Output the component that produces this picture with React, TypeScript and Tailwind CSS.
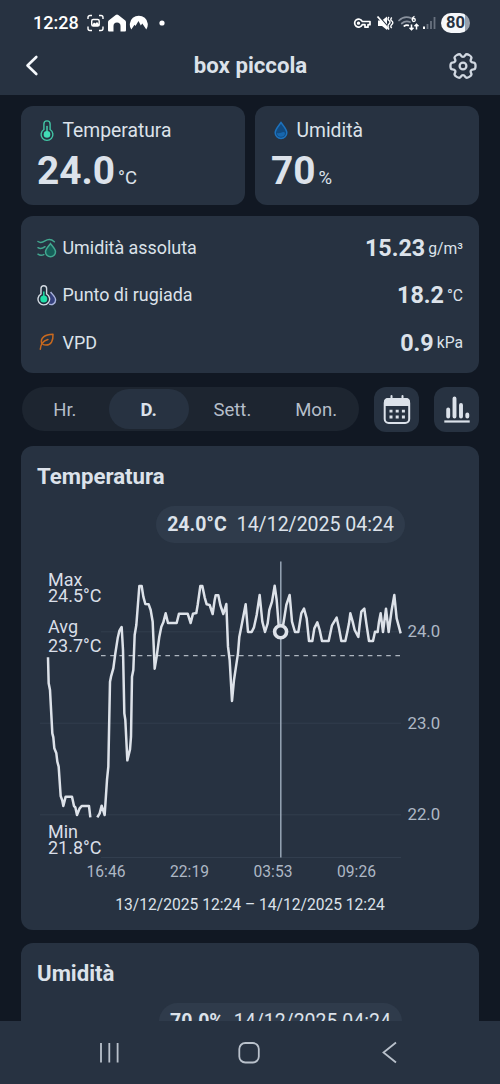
import type {ReactNode} from "react";

type Point = [number, number];

const TABS = ["Hr.", "D.", "Sett.", "Mon."];

const GRID = [
  {y: 81.8, x: 80, label: "24.0"},
  {y: 173.2, x: 19, label: "23.0"},
  {y: 264.8, x: 19, label: "22.0"},
];

const HOURS = [
  {x: 85, label: "16:46"},
  {x: 168.5, label: "22:19"},
  {x: 252, label: "03:53"},
  {x: 335.5, label: "09:26"},
];

// Samples are stored in thirds of a pixel, the chart scales them down
const FIRST_RUN: Point[] = [
  [54, 322], [56, 400], [60, 420], [67, 550], [70, 562], [73, 595], [79, 610], [82, 635], [86, 650],
  [92, 738], [97, 752], [100, 768], [107, 740], [126, 740], [132, 768], [136, 772], [141, 795],
  [149, 775], [155, 768], [177, 768], [181, 802],
];

const SECOND_RUN: Point[] = [
  [202, 802], [209, 790], [215, 767], [224, 795], [231, 690], [235, 650], [240, 395], [243, 380],
  [250, 355], [256, 310], [263, 265], [268, 243], [275, 231], [279, 300], [283, 490], [286, 510],
  [292, 631], [300, 598], [303, 560], [306, 380], [310, 360], [314, 255], [319, 225], [328, 108],
  [335, 108], [340, 140], [346, 162], [356, 163], [362, 180], [368, 215], [374, 356], [380, 320],
  [388, 260], [394, 230], [400, 217], [407, 190], [414, 219], [440, 219], [447, 191], [473, 191],
  [482, 219], [489, 191], [499, 189], [503, 165], [511, 108], [517, 108], [524, 142], [530, 163],
  [539, 165], [548, 192], [554, 150], [557, 136], [565, 136], [571, 165], [580, 192], [589, 162],
  [594, 290], [599, 330], [606, 453], [612, 390], [618, 350], [624, 310], [628, 260], [634, 230],
  [647, 163], [654, 246], [665, 246], [672, 232], [680, 195], [689, 135], [697, 215], [705, 246],
  [713, 220], [718, 180], [726, 155], [734, 107], [740, 150], [746, 225], [752, 246], [760, 222],
  [769, 165], [779, 135], [786, 215], [795, 246], [805, 246], [810, 215], [814, 190], [822, 176],
  [830, 205], [837, 273], [847, 273], [853, 235], [862, 217], [869, 240], [876, 273], [896, 273],
  [906, 226], [920, 203], [927, 235], [934, 273], [946, 273], [952, 245], [957, 220], [961, 190],
  [968, 215], [974, 240], [985, 261], [989, 225], [994, 185], [1003, 176], [1009, 220], [1017, 273],
  [1029, 273], [1035, 245], [1043, 246], [1047, 215], [1052, 190], [1059, 246], [1068, 176],
  [1076, 246], [1085, 180], [1093, 135], [1100, 205], [1112, 250],
];

function toPoints(points: Point[]) {
  return points.map((point) => point.join(",")).join(" ");
}

function gearPath() {
  const corners: Point[] = [];

  for (let i = 0; i < 6; i++) {
    [
      [13, -15],
      [13, 15],
      [9.2, 22],
      [9.2, 38],
    ].forEach(([radius, offset]) => {
      const angle = ((i * 60 + offset) * Math.PI) / 180;

      corners.push([14 + radius * Math.cos(angle), 14 + radius * Math.sin(angle)]);
    });
  }

  const middle = (a: Point, b: Point) => `${(a[0] + b[0]) / 2} ${(a[1] + b[1]) / 2}`;

  return (
    `M${middle(corners[corners.length - 1], corners[0])}` +
    corners
      .map((corner, i) => `Q${corner.join(" ")} ${middle(corner, corners[(i + 1) % corners.length])}`)
      .join("") +
    "Z"
  );
}

function ThermometerIcon() {
  return (
    <svg className="h-[22px] w-5" fill="none" viewBox="0 0 20 22">
      <path
        d="M6.900 9.500V4a3.100 3.100 0 0 1 6.200 0V9.500a5.900 5.900 0 1 1-6.200 0Z"
        stroke="#42c5a5"
        strokeWidth="1.400"
      />
      <path d="M10 6.500v7" stroke="#42c5a5" strokeLinecap="round" strokeWidth="1.600" />
      <circle cx="10" cy="14.400" fill="#42dcb6" r="3.300" />
    </svg>
  );
}

function DropIcon() {
  return (
    <svg className="h-[22px] w-5" fill="none" viewBox="0 0 20 22">
      <path
        d="M10 2.500C7.800 5.700 4.200 9.100 4.200 12.700a5.800 5.800 0 0 0 11.600 0C15.800 9.100 12.200 5.700 10 2.500Z"
        fill="#124a7f"
        stroke="#1d72bd"
        strokeWidth="1.500"
      />
      <path d="M6 12.700a4 4 0 0 0 8 0c-1.500-1.500-2.500-.5-4 0s-2.500.8-4 0Z" fill="#1767ae" />
    </svg>
  );
}

function AbsoluteIcon() {
  return (
    <svg className="h-[22px] w-5" fill="none" viewBox="0 0 20 22">
      <g stroke="#42a890" strokeLinecap="round" strokeWidth="1.500">
        <path d="M1 3.500c2.500 1.800 4.500 1 7-.6s6-2.200 9.300.8" />
        <path d="M1 9.700c2.200 1.500 4.500 1 7-1" />
        <path d="M1 16.200c2 1.400 4 1.300 5.800.4" />
      </g>
      <path
        d="M13.500 5.600c-1.900 2.600-5 5-5 8.200a5 5 0 0 0 10 0c0-3.200-3.100-5.600-5-8.200Z"
        fill="#155e58"
        stroke="#42a890"
        strokeWidth="1.500"
      />
    </svg>
  );
}

function DewIcon() {
  return (
    <svg className="h-[22px] w-5" fill="none" viewBox="0 0 20 22">
      <path
        d="M13.600 7c2 2.700 5 4.800 5 8a4.600 4.600 0 0 1-6.400 4.200"
        fill="#35417d"
        stroke="#aab4dc"
        strokeWidth="1.400"
      />
      <path
        d="M4 9V3.500a2.800 2.800 0 0 1 5.600 0V9a5.800 5.800 0 1 1-5.600 0Z"
        fill="#1f2f3d"
        stroke="#d5dbe3"
        strokeWidth="1.400"
      />
      <path d="M6.800 6.500v7" stroke="#21cf9c" strokeWidth="1.600" />
      <circle cx="6.800" cy="14" fill="#21dfa8" r="3.500" />
    </svg>
  );
}

function LeafIcon() {
  return (
    <svg className="h-[22px] w-5" fill="none" viewBox="0 0 20 22">
      <g stroke="#c9691e" strokeLinecap="round" strokeLinejoin="round" strokeWidth="1.500">
        <path d="M4.600 11.300C3.200 6 7.500 2.500 16 2.300c.3 6.300-1.800 10.700-7 10.700-1.300 0-2.300-.2-3-.6" />
        <path d="M3.300 17.300c.2-5 2.200-8.500 7.600-9.900" />
      </g>
    </svg>
  );
}

function StatusBar() {
  return (
    <div className="flex h-[44px] items-center pt-px pr-[30px] pl-[33px] text-white">
      <span className="w-[52.500px] text-[18px] leading-none font-medium">12:28</span>
      <svg className="h-[18px] w-[84px]" fill="none" viewBox="0 0 84 18">
        <g stroke="#fff" strokeWidth="1.400">
          <path d="M2 5V3.500A2 2 0 0 1 4 1.500h2M13 1.500h2a2 2 0 0 1 2 2V5M17 12.500v2a2 2 0 0 1-2 2h-2M6 16.500H4a2 2 0 0 1-2-2v-2" />
          <rect height="6.500" rx="1.500" width="7.500" x="5.700" y="5.500" />
        </g>
        <path d="m6 11 2-2.500 1.500 1 1.500-1.500 2.300 2.500v1.500H6Z" fill="#fff" />
        <path
          d="M22 16V8.200c0-.8.4-1.400 1-1.900l6.700-5.400a2.200 2.200 0 0 1 2.600 0L39 6.300c.6.500 1 1.100 1 1.900V16c0 1-.5 1.500-1.500 1.500h-4V12a3.500 3.500 0 0 0-7 0v5.500h-4c-1 0-1.500-.5-1.500-1.500Z"
          fill="#fff"
        />
        <path
          d="M45.300 15.600A9 9 0 1 1 60.300 15.600L56.300 9.500l-1.500 2L52.500 7l-3 5-1-1.200Z"
          fill="#fff"
        />
        <circle cx="76" cy="9" fill="#fff" r="2.600" />
      </svg>
      <svg className="mr-[5.500px] ml-auto h-[18px] w-[83px]" fill="none" viewBox="0 0 83 18">
        <g stroke="#fff" strokeWidth="1.700">
          <path d="M9.300 7.500H17v3.200h-2v2.500h-3v-2.500H9.300a4 4 0 1 1 0-3.200Z" strokeLinejoin="round" />
          <circle cx="5.500" cy="9.200" fill="#fff" r=".8" />
        </g>
        <path d="M25 6.500h4l5-4V16l-5-4h-4Z" fill="#fff" />
        <path d="m25.500 2 11.500 13" stroke="#273241" strokeWidth="1.500" />
        <path d="m24.500 2.500 11.500 13" stroke="#fff" strokeWidth="1.800" />
        <path
          d="M36 3q-2 2 0 3.500t0 3.500 0 3.500M38.800 3.500q-2 2 0 3.500t0 3.500 0 3.500"
          stroke="#fff"
          strokeWidth="1.400"
        />
        <g strokeLinecap="round" strokeWidth="1.700">
          <path d="M46 6.500C49.500 3 54 2.300 58.500 4.300" stroke="#8a929e" />
          <path d="M48.700 9.500c2.600-2.300 5.500-2.600 8.300-1.500" stroke="#8a929e" />
          <path d="M51.300 12c1.300-1 2.500-1.200 4-.6" stroke="#fff" />
        </g>
        <path
          d="M58.500 10.500v5m-2-1.700 2 2 2-2M63.500 15.500v-5m-2 1.700 2-2 2 2"
          stroke="#fff"
          strokeWidth="1.500"
        />
        <path d="M61.500 2.300q-2.300 1-2.300 3.400" stroke="#fff" strokeWidth="1.300" />
        <circle cx="60.800" cy="6" r="1.500" stroke="#fff" strokeWidth="1.300" />
        <path d="M71 12.500V15" stroke="#fff" strokeWidth="2" />
        <path d="M74.500 10v5M78 7v8M81.500 3v12" stroke="#69727f" strokeWidth="1.800" />
      </svg>
      <span className="flex h-5 w-[29px] items-center justify-center rounded-full bg-linear-to-r from-[#f5f7fa] from-82% to-[#98a0ab] to-82% pt-0.5 text-[16.500px] leading-none font-bold text-[#273241]">
        80
      </span>
    </div>
  );
}

function Reading({icon, label, value, unit}: {icon: ReactNode; label: string; value: string; unit: string}) {
  return (
    <article className="h-[99px] flex-1 rounded-xl bg-[#273241] px-4 pt-[13px]">
      <div className="flex items-center gap-[5.500px] text-[19.300px] leading-6">
        {icon}
        <h2>{label}</h2>
      </div>
      <p className="mt-1.5 flex items-baseline gap-[3px] leading-[44px]">
        <span className="text-[38.800px] font-bold">{value}</span>
        <span className="text-[18.500px]">{unit}</span>
      </p>
    </article>
  );
}

function Measure({icon, label, value, unit}: {icon: ReactNode; label: string; value: string; unit: string}) {
  return (
    <li className="flex h-[47.200px] items-center gap-[5.500px]">
      {icon}
      <span className="text-[17.900px]">{label}</span>
      <p className="ml-auto flex items-center gap-[3px]">
        <span className="text-[23.300px] font-bold">{value}</span>
        <span className="text-[15.700px]">{unit}</span>
      </p>
    </li>
  );
}

function Marker({value, date}: {value: string; date: string}) {
  return (
    <p className="mx-auto flex h-[37px] w-fit items-center gap-2.5 rounded-full bg-[#2f3b4b] px-[11px] pt-px text-[19.500px]">
      <b>{value}</b>
      <span>{date}</span>
    </p>
  );
}

function Chart() {
  return (
    <svg className="block h-[335px] w-full" fill="none" viewBox="0 0 458 335">
      <g stroke="#323e4e" strokeWidth="1">
        {GRID.map(({y, x, label}) => (
          <path key={label} d={`M${x} ${y}H380`} />
        ))}
        <path d="M80 307.500H380" />
      </g>
      <path d="M80 105.700H380" stroke="#aeb6c0" strokeDasharray="4.600 4.600" strokeWidth="1.300" />
      <g
        stroke="#dde2e9"
        strokeLinejoin="round"
        strokeWidth="7.500"
        transform="translate(9 0) scale(.33333)"
      >
        <polyline points={toPoints(FIRST_RUN)} />
        <polyline points={toPoints(SECOND_RUN)} />
      </g>
      <path d="M259.800 11.500V307.500" stroke="#98a6b6" strokeWidth="1.500" />
      <circle cx="259.600" cy="81.800" fill="#273241" r="6" stroke="#dde2e9" strokeWidth="3.600" />
      <g fill="#d9dfe8" fontSize="18">
        <text x="27" y="35.500">Max</text>
        <text x="27" y="52.300">24.5°C</text>
        <text x="27" y="82.500">Avg</text>
        <text x="27" y="101.700">23.7°C</text>
        <text x="27" y="287.700">Min</text>
        <text x="27" y="304.300">21.8°C</text>
      </g>
      <g fill="#aeb8c5" fontSize="16.800">
        {GRID.map(({y, label}) => (
          <text key={label} x="386.500" y={y + 5.300}>
            {label}
          </text>
        ))}
      </g>
      <g fill="#aeb8c5" fontSize="15.600" textAnchor="middle">
        {HOURS.map(({x, label}) => (
          <text key={label} x={x} y="327.300">
            {label}
          </text>
        ))}
      </g>
    </svg>
  );
}

export default function App() {
  return (
    <div className="flex h-[1084px] w-[500px] flex-col overflow-hidden bg-[#111823] font-[Roboto,sans-serif] text-[#dce2ea]">
      <header className="h-[95px] shrink-0 bg-[#273241]">
        <StatusBar />
        <div className="flex h-[43px] items-center justify-between pr-[23px] pl-[24px]">
          <svg className="h-7 w-7" fill="none" viewBox="0 0 28 28">
            <path
              d="m12.300 5-8.800 8.500 8.800 8.500"
              stroke="#f5f8fc"
              strokeLinecap="round"
              strokeLinejoin="round"
              strokeWidth="2.600"
            />
          </svg>
          <h1 className="text-[22.200px] font-bold">box piccola</h1>
          <svg className="h-7 w-7" fill="none" stroke="#d0d7e0" strokeWidth="2.300" viewBox="0 0 28 28">
            <path d={gearPath()} />
            <circle cx="14" cy="14" r="3.400" />
          </svg>
        </div>
      </header>

      <main className="flex min-h-0 flex-1 flex-col overflow-hidden px-[21px] pt-[11px]">
        <section className="flex shrink-0 gap-2.5">
          <Reading icon={<ThermometerIcon />} label="Temperatura" unit="°C" value="24.0" />
          <Reading icon={<DropIcon />} label="Umidità" unit="%" value="70" />
        </section>

        <ul className="mt-[11px] h-[157px] shrink-0 rounded-xl bg-[#273241] px-4 pt-[9px]">
          <Measure icon={<AbsoluteIcon />} label="Umidità assoluta" unit="g/m³" value="15.23" />
          <Measure icon={<DewIcon />} label="Punto di rugiada" unit="°C" value="18.2" />
          <Measure icon={<LeafIcon />} label="VPD" unit="kPa" value="0.9" />
        </ul>

        <nav className="mt-3.5 flex h-11 shrink-0">
          <div className="ml-px flex w-[337px] items-center rounded-full bg-[#1d2530] px-[1px] text-[18.500px] text-[#b5bec9]">
            {TABS.map((tab) => (
              <button
                key={tab}
                className={
                  tab === "D."
                    ? "mx-0.5 h-10 flex-1 rounded-full bg-[#273241] pt-[3px] font-bold text-[#dce2ea]"
                    : "mx-0.5 h-10 flex-1 rounded-full pt-[3px]"
                }
                type="button"
              >
                {tab}
              </button>
            ))}
          </div>
          <button
            className="ml-[15px] flex size-[45px] items-center justify-center rounded-xl bg-[#273241]"
            type="button"
          >
            <svg className="h-[30px] w-7" fill="none" viewBox="0 0 28 30">
              <rect height="24" rx="4" stroke="#dce2ea" strokeWidth="2" width="24.500" x="1.700" y="4" />
              <path d="M1 11V7a4 4 0 0 1 4-4h18a4 4 0 0 1 4 4v4Z" fill="#dce2ea" />
              <path d="M8.500 1v4M19.500 1v4" stroke="#dce2ea" strokeLinecap="round" strokeWidth="2" />
              <path
                d="M6.500 16.200h3M12.700 16.200h3M18.900 16.200h3M6.500 22h3M12.700 22h3M18.900 22h3"
                stroke="#dce2ea"
                strokeWidth="2.800"
              />
            </svg>
          </button>
          <button
            className="ml-auto flex size-[45px] items-center justify-center rounded-xl bg-[#273241]"
            type="button"
          >
            <svg className="h-7 w-[26px]" fill="none" stroke="#dce2ea" viewBox="0 0 26 28">
              <path
                d="M4.200 13.500V20.500M10.500 2.500v18M17 9V20.500M23.300 18.500v2"
                strokeLinecap="round"
                strokeWidth="3.900"
              />
              <path d="M.3 25.500h25.400" strokeWidth="2.200" />
            </svg>
          </button>
        </nav>

        <section className="mt-[15px] h-[484px] shrink-0 rounded-xl bg-[#273241] pt-[14px]">
          <h2 className="px-4 text-[22.200px] leading-8 font-bold">Temperatura</h2>
          <div className="mt-[14px] pl-[61px]">
            <Marker date="14/12/2025 04:24" value="24.0°C" />
          </div>
          <div className="mt-[7px]">
            <Chart />
          </div>
          <p className="mt-[8px] text-center text-[15.600px] leading-6">
            13/12/2025 12:24 – 14/12/2025 12:24
          </p>
        </section>

        <section className="mt-[13px] h-[484px] shrink-0 rounded-xl bg-[#273241] pt-[14px]">
          <h2 className="px-4 text-[22.200px] leading-8 font-bold">Umidità</h2>
          <div className="mt-[14px] pl-[61px]">
            <Marker date="14/12/2025 04:24" value="70.0%" />
          </div>
        </section>
      </main>

      <footer className="flex h-[63px] shrink-0 items-center justify-between bg-[#273241] px-[98px]">
        <svg className="h-6 w-6" fill="none" stroke="#b9c1cb" strokeWidth="1.800" viewBox="0 0 24 24">
          <path d="M3 2v19.500M11.300 2v19.500M19.600 2v19.500" />
        </svg>
        <svg className="h-6 w-6" fill="none" stroke="#b9c1cb" strokeWidth="1.800" viewBox="0 0 24 24">
          <rect height="19.500" rx="6" width="19.500" x="1.300" y="2" />
        </svg>
        <svg className="h-6 w-6" fill="none" stroke="#b9c1cb" strokeWidth="1.800" viewBox="0 0 24 24">
          <path d="m18 1.500-12.500 10 12.500 10" />
        </svg>
      </footer>
    </div>
  );
}
